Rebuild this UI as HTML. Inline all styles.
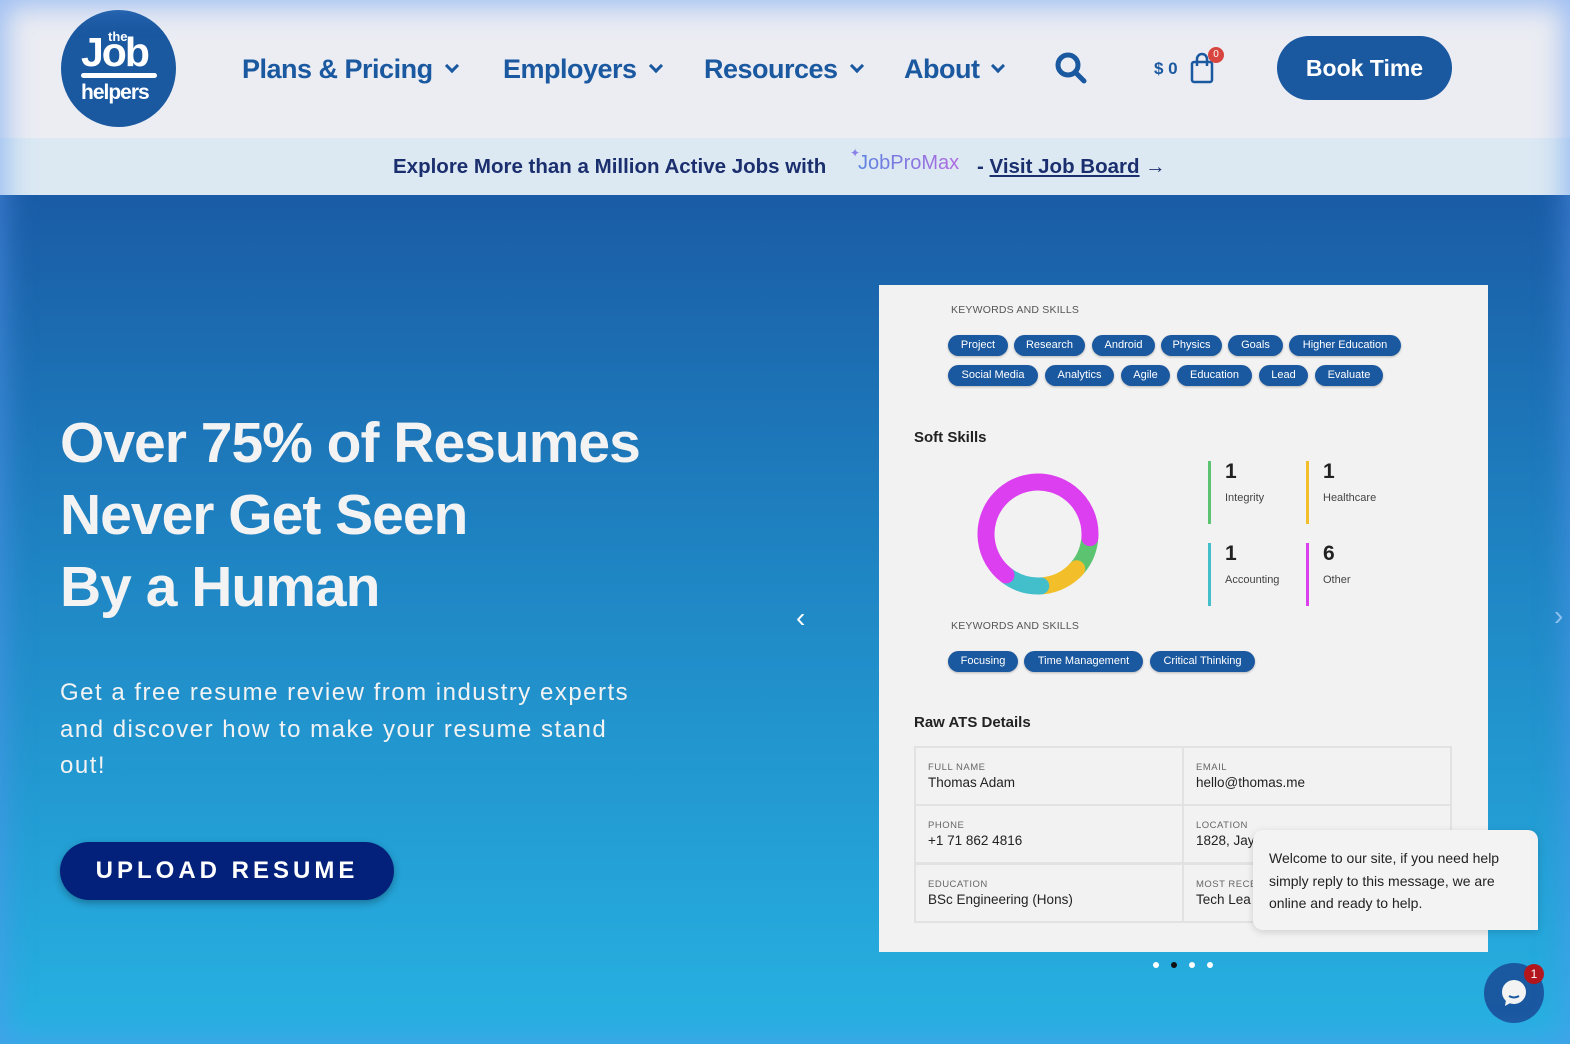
<!DOCTYPE html>
<html><head><meta charset="utf-8">
<style>
*{margin:0;padding:0;box-sizing:border-box}
body{width:1570px;height:1044px;overflow:hidden;position:relative;font-family:"Liberation Sans",sans-serif;background:#ecedf3}
.abs{position:absolute}
#hero{position:absolute;left:0;top:195px;width:1570px;height:849px;background:linear-gradient(180deg,#1a5ca6 0%,#1f86c4 45%,#27b2e2 100%)}
.nav{position:absolute;top:54px;font-size:27px;font-weight:bold;color:#1a58a0;letter-spacing:-0.5px}
.chev{display:inline-block;width:10px;height:10px;border-right:3px solid #1a58a0;border-bottom:3px solid #1a58a0;transform:rotate(45deg);margin-left:14px;position:relative;top:-7px}
.card{position:absolute;left:879px;top:285px;width:609px;height:667px;background:#f2f2f2}
.tag{position:absolute;height:21px;background:#1a58a0;color:#fff;font-size:11px;border-radius:11px;text-align:center;line-height:21px;box-shadow:0 1px 2px rgba(0,0,0,.25)}
.kw{position:absolute;font-size:10.5px;color:#555;letter-spacing:0.2px}
.h3{position:absolute;font-size:15px;font-weight:bold;color:#222}
.bar{position:absolute;width:3px;height:63px}
.num{position:absolute;font-size:21px;font-weight:bold;color:#222}
.lab{position:absolute;font-size:11px;color:#444}
.cell{position:absolute;border:2px solid #e2e2e2;width:270px;height:60px}
.cl{position:absolute;left:12px;top:14px;font-size:9.5px;color:#666;letter-spacing:.5px}
.cv{position:absolute;left:12px;top:27px;font-size:13.5px;color:#222}
</style></head><body>
<div class="abs" style="left:0;top:0;width:1570px;height:138px;background:#ecedf3"></div>
<div class="abs" style="left:0;top:138px;width:1570px;height:57px;background:#dce9f3"></div>
<div class="abs" style="left:61px;top:10px;width:115px;height:117px;border-radius:50%;background:#1a58a0"></div>
<div class="abs" style="left:108px;top:29px;color:#fff;font-size:13px;font-weight:bold">the</div>
<div class="abs" style="left:81px;top:29px;color:#fff;font-size:41px;font-weight:bold;letter-spacing:-2px">Job</div>
<div class="abs" style="left:81px;top:73px;width:76px;height:5px;border-radius:3px;background:#fff"></div>
<div class="abs" style="left:81px;top:81px;color:#fff;font-size:21px;font-weight:bold;letter-spacing:-1px">helpers</div>

<div class="nav" style="left:242px">Plans &amp; Pricing<span class="chev"></span></div>
<div class="nav" style="left:503px">Employers<span class="chev"></span></div>
<div class="nav" style="left:704px">Resources<span class="chev"></span></div>
<div class="nav" style="left:904px">About<span class="chev"></span></div>
<svg class="abs" style="left:1053px;top:50px" width="36" height="36" viewBox="0 0 36 36"><circle cx="15" cy="15" r="10" fill="none" stroke="#1a58a0" stroke-width="5"/><line x1="22" y1="22" x2="31" y2="31" stroke="#1a58a0" stroke-width="5" stroke-linecap="round"/></svg>
<div class="abs" style="left:1154px;top:59px;font-size:17px;font-weight:bold;color:#1a58a0">$ 0</div>
<svg class="abs" style="left:1190px;top:52px" width="26" height="32" viewBox="0 0 26 32"><rect x="2" y="10" width="20" height="20" rx="2" fill="none" stroke="#1a58a0" stroke-width="2.5"/><path d="M7 14V7a5 5 0 0 1 10 0v7" fill="none" stroke="#1a58a0" stroke-width="2.5"/></svg>
<div class="abs" style="left:1208px;top:47px;width:16px;height:16px;border-radius:50%;background:#d8453f;color:#fff;font-size:10px;text-align:center;line-height:16px">0</div>
<div class="abs" style="left:1277px;top:36px;width:175px;height:64px;border-radius:32px;background:#1a58a0;color:#fff;font-size:23px;font-weight:bold;text-align:center;line-height:64px">Book Time</div>

<div class="abs" style="left:393px;top:155px;font-size:20.5px;font-weight:bold;color:#1b2f6e">Explore More than a Million Active Jobs with</div>
<div class="abs" style="left:850px;top:146px;font-size:12px;color:#8a7fe8">✦</div>
<div class="abs" style="left:858px;top:152px;font-size:20px;background:linear-gradient(90deg,#5b84e0,#b06ae0);-webkit-background-clip:text;color:transparent">JobProMax</div>
<div class="abs" style="left:977px;top:155px;font-size:20.5px;font-weight:bold;color:#1b2f6e">- <span style="text-decoration:underline">Visit Job Board</span> →</div>

<div id="hero"></div>
<div class="abs" style="left:60px;top:407px;font-size:57px;font-weight:bold;color:#f3f3f3;line-height:72px;letter-spacing:-1px">Over 75% of Resumes<br>Never Get Seen<br>By a Human</div>
<div class="abs" style="left:60px;top:675px;font-size:24px;color:#f3f3f3;line-height:36.5px;white-space:nowrap;letter-spacing:1.5px">Get a free resume review from industry experts<br>and discover how to make your resume stand<br>out!</div>
<div class="abs" style="left:60px;top:842px;width:334px;height:58px;border-radius:29px;background:#03207a;color:#fff;font-size:24px;font-weight:bold;letter-spacing:4px;text-align:center;line-height:58px;box-shadow:0 3px 8px rgba(0,0,0,.3)">UPLOAD RESUME</div>
<div class="abs" style="left:796px;top:602px;color:#fff;font-size:28px">‹</div>
<div class="abs" style="left:1554px;top:600px;color:#9ccdf0;font-size:28px">›</div>

<div class="card">
<div class="kw" style="left:72px;top:19px">KEYWORDS AND SKILLS</div>
<div class="tag" style="left:69px;top:50px;width:60px">Project</div>
<div class="tag" style="left:135px;top:50px;width:71px">Research</div>
<div class="tag" style="left:213px;top:50px;width:63px">Android</div>
<div class="tag" style="left:282px;top:50px;width:61px">Physics</div>
<div class="tag" style="left:349px;top:50px;width:55px">Goals</div>
<div class="tag" style="left:410px;top:50px;width:112px">Higher Education</div>
<div class="tag" style="left:69px;top:80px;width:90px">Social Media</div>
<div class="tag" style="left:166px;top:80px;width:69px">Analytics</div>
<div class="tag" style="left:242px;top:80px;width:49px">Agile</div>
<div class="tag" style="left:298px;top:80px;width:75px">Education</div>
<div class="tag" style="left:380px;top:80px;width:49px">Lead</div>
<div class="tag" style="left:436px;top:80px;width:68px">Evaluate</div>
<div class="h3" style="left:35px;top:144px">Soft Skills</div>
<svg class="abs" style="left:79px;top:169px" width="160" height="160" viewBox="0 0 160 160">
<g fill="none" stroke-width="17" stroke-linecap="round">
<circle cx="80" cy="80" r="52" stroke="#5cc470" stroke-dasharray="34 400" transform="rotate(8 80 80)"/>
<circle cx="80" cy="80" r="52" stroke="#f2bf2a" stroke-dasharray="38 400" transform="rotate(42 80 80)"/>
<circle cx="80" cy="80" r="52" stroke="#43bfcb" stroke-dasharray="36 400" transform="rotate(87 80 80)"/>
<circle cx="80" cy="80" r="52" stroke="#dc3ff0" stroke-dasharray="214 400" transform="rotate(128 80 80)"/>
</g></svg>
<div class="bar" style="left:329px;top:176px;background:#5cc470"></div>
<div class="bar" style="left:427px;top:176px;background:#f2bf2a"></div>
<div class="bar" style="left:329px;top:258px;background:#43bfcb"></div>
<div class="bar" style="left:427px;top:258px;background:#dc3ff0"></div>
<div class="num" style="left:346px;top:175px">1</div><div class="lab" style="left:346px;top:207px">Integrity</div>
<div class="num" style="left:444px;top:175px">1</div><div class="lab" style="left:444px;top:207px">Healthcare</div>
<div class="num" style="left:346px;top:257px">1</div><div class="lab" style="left:346px;top:289px">Accounting</div>
<div class="num" style="left:444px;top:257px">6</div><div class="lab" style="left:444px;top:289px">Other</div>
<div class="kw" style="left:72px;top:335px">KEYWORDS AND SKILLS</div>
<div class="tag" style="left:69px;top:366px;width:70px">Focusing</div>
<div class="tag" style="left:145px;top:366px;width:119px">Time Management</div>
<div class="tag" style="left:271px;top:366px;width:105px">Critical Thinking</div>
<div class="h3" style="left:35px;top:429px">Raw ATS Details</div>
<div class="cell" style="left:35px;top:461px"><div class="cl">FULL NAME</div><div class="cv">Thomas Adam</div></div>
<div class="cell" style="left:303px;top:461px"><div class="cl">EMAIL</div><div class="cv">hello@thomas.me</div></div>
<div class="cell" style="left:35px;top:519px"><div class="cl">PHONE</div><div class="cv">+1 71 862 4816</div></div>
<div class="cell" style="left:303px;top:519px"><div class="cl">LOCATION</div><div class="cv">1828, Jay</div></div>
<div class="cell" style="left:35px;top:578px"><div class="cl">EDUCATION</div><div class="cv">BSc Engineering (Hons)</div></div>
<div class="cell" style="left:303px;top:578px"><div class="cl">MOST RECE</div><div class="cv">Tech Lea</div></div>
</div>

<div class="abs" style="left:1153px;top:962px;width:6px;height:6px;border-radius:50%;background:#fff"></div>
<div class="abs" style="left:1171px;top:962px;width:6px;height:6px;border-radius:50%;background:#111"></div>
<div class="abs" style="left:1189px;top:962px;width:6px;height:6px;border-radius:50%;background:#fff"></div>
<div class="abs" style="left:1207px;top:962px;width:6px;height:6px;border-radius:50%;background:#fff"></div>

<div class="abs" style="left:1253px;top:830px;width:285px;height:100px;background:#f3f3f3;border-radius:10px 10px 0 10px;box-shadow:0 2px 8px rgba(0,0,0,.15);padding:17px 16px;font-size:14px;line-height:22.5px;color:#222">Welcome to our site, if you need help simply reply to this message, we are online and ready to help.</div>
<div class="abs" style="left:1484px;top:963px;width:60px;height:60px;border-radius:50%;background:#1a58a0"></div>
<svg class="abs" style="left:1498px;top:978px" width="32" height="32" viewBox="0 0 32 32"><circle cx="16" cy="14" r="12" fill="#f3f3f3"/><path d="M8 22l-1 6 7-4z" fill="#f3f3f3"/><path d="M11 18q5 3 10 0" stroke="#1a58a0" stroke-width="2" fill="none"/></svg>
<div class="abs" style="left:1524px;top:964px;width:20px;height:20px;border-radius:50%;background:#b4161c;color:#fff;font-size:12px;text-align:center;line-height:20px">1</div>

<div class="abs" style="left:0;top:0;width:1570px;height:1044px;box-shadow:inset 0 0 28px 6px rgba(90,150,240,.55);pointer-events:none"></div>
</body></html>
